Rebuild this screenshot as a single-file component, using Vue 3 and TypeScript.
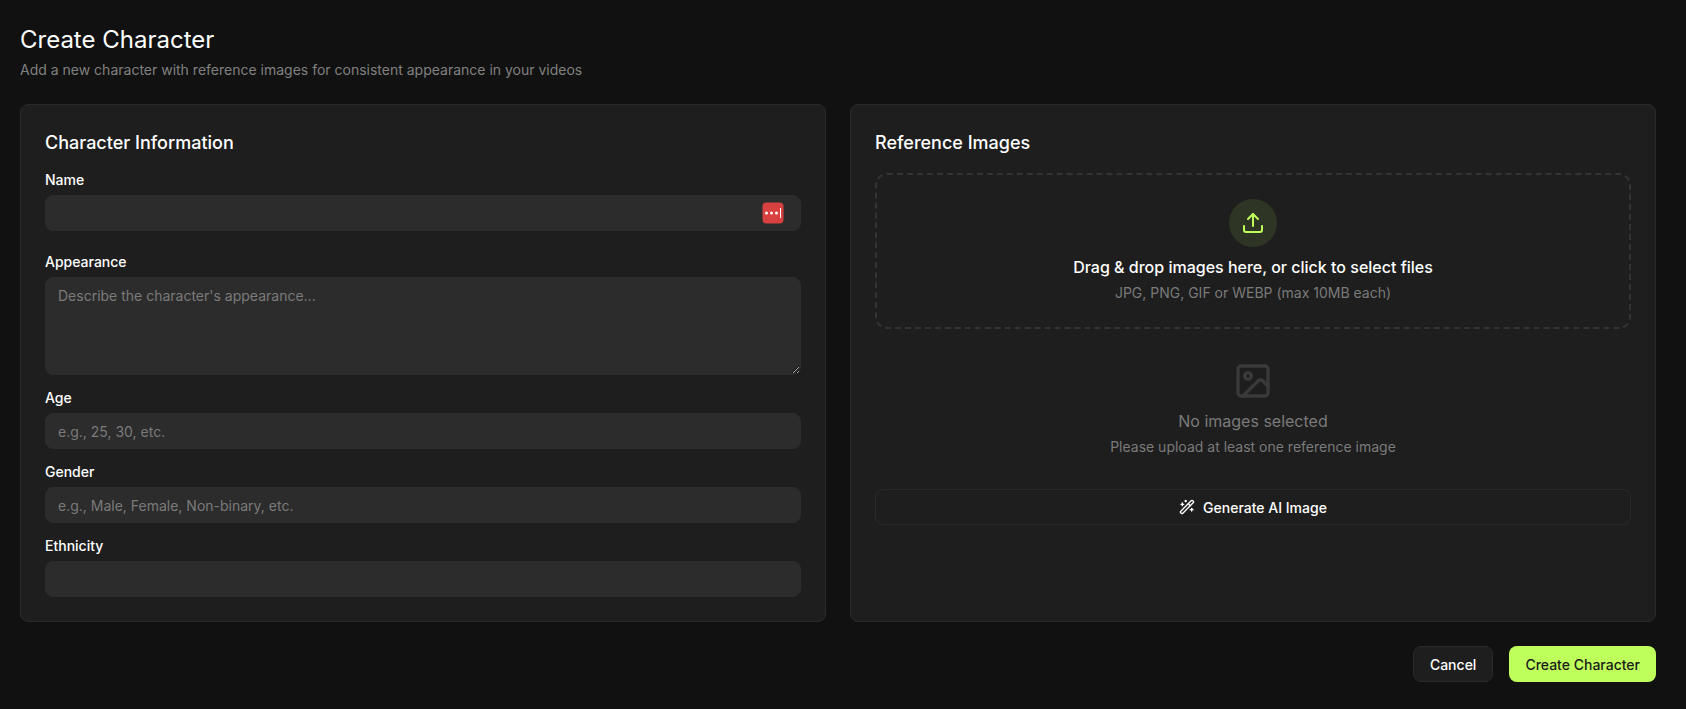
<script setup lang="ts">
interface Field { label: string; placeholder: string }
const lowerFields: Field[] = [
  { label: 'Age', placeholder: 'e.g., 25, 30, etc.' },
  { label: 'Gender', placeholder: 'e.g., Male, Female, Non-binary, etc.' },
  { label: 'Ethnicity', placeholder: '' },
]
</script>

<template>
  <main class="page">
    <header class="head">
      <h1>Create Character</h1>
      <p>Add a new character with reference images for consistent appearance in your videos</p>
    </header>

    <div class="columns">
      <section class="card">
        <h2 class="info-title">Character Information</h2>
        <div class="field name-field">
          <label>Name</label>
          <div class="input-wrap">
            <input type="text" />
            <svg class="pass-icon" width="22" height="22" viewBox="0 0 22 22" aria-hidden="true">
              <rect x="0.5" y="0.5" width="21" height="21" rx="4" fill="#d94141" />
              <circle cx="4.5" cy="11" r="1.5" fill="#fff" />
              <circle cx="9.5" cy="11" r="1.5" fill="#fff" />
              <circle cx="14.5" cy="11" r="1.5" fill="#fff" />
              <rect x="18" y="6" width="1" height="10" fill="#fff" />
            </svg>
          </div>
        </div>
        <div class="field">
          <label>Appearance</label>
          <textarea placeholder="Describe the character's appearance..."></textarea>
        </div>
        <div v-for="f in lowerFields" :key="f.label" class="field">
          <label>{{ f.label }}</label>
          <input type="text" :placeholder="f.placeholder" />
        </div>
      </section>

      <section class="card">
        <h2 class="images-title">Reference Images</h2>
        <div class="drop">
          <span class="drop-circle">
            <svg width="24" height="24" viewBox="0 0 24 24" fill="none" stroke="#bfff5c" stroke-width="2" stroke-linecap="round" stroke-linejoin="round" aria-hidden="true">
              <path d="M12 3v12" />
              <path d="m17 8-5-5-5 5" />
              <path d="M21 15v4a2 2 0 0 1-2 2H5a2 2 0 0 1-2-2v-4" />
            </svg>
          </span>
          <p class="drop-title">Drag &amp; drop images here, or click to select files</p>
          <p class="drop-sub">JPG, PNG, GIF or WEBP (max 10MB each)</p>
        </div>

        <div class="empty">
          <svg width="40" height="40" viewBox="0 0 24 24" fill="none" stroke="#3a3a3a" stroke-width="2" stroke-linecap="round" stroke-linejoin="round" aria-hidden="true">
            <rect x="3" y="3" width="18" height="18" rx="2" ry="2" />
            <circle cx="9" cy="9" r="2" />
            <path d="m21 15-3.086-3.086a2 2 0 0 0-2.828 0L6 21" />
          </svg>
          <p class="empty-title">No images selected</p>
          <p class="empty-sub">Please upload at least one reference image</p>
        </div>

        <button class="generate" type="button">
          <svg width="16" height="16" viewBox="0 0 24 24" fill="none" stroke="currentColor" stroke-width="2" stroke-linecap="round" stroke-linejoin="round" aria-hidden="true">
            <path d="m21.64 3.64-1.28-1.28a1.21 1.21 0 0 0-1.72 0L2.36 18.64a1.21 1.21 0 0 0 0 1.72l1.28 1.28a1.2 1.2 0 0 0 1.72 0L21.64 5.36a1.2 1.2 0 0 0 0-1.72" />
            <path d="m14 7 3 3" />
            <path d="M5 6v4" />
            <path d="M19 14v4" />
            <path d="M10 2v2" />
            <path d="M7 8H3" />
            <path d="M21 16h-4" />
            <path d="M11 3H9" />
          </svg>
          Generate AI Image
        </button>
      </section>
    </div>

    <footer class="actions">
      <button class="btn cancel" type="button">Cancel</button>
      <button class="btn primary" type="button">Create Character</button>
    </footer>
  </main>
</template>

<style>
html, body { background: #111111; }
</style>

<style scoped>
.page {
  box-sizing: border-box;
  height: 100vh;
  padding: 24px 30px 0 20px;
  background: #111111;
  color: #fff;
  font-family: Inter, "Liberation Sans", sans-serif;
}
.head h1 {
  margin: 0;
  font-size: 24px;
  line-height: 32px;
  font-weight: 400;
}
.head p {
  margin: 4px 0 0;
  font-size: 14px;
  line-height: 20px;
  color: #808080;
}
.columns {
  display: grid;
  grid-template-columns: 1fr 1fr;
  gap: 24px;
  margin-top: 24px;
}
.card {
  box-sizing: border-box;
  padding: 24px;
  background: #1e1e1e;
  border: 1px solid #2a2a2a;
  border-radius: 8px;
}
.card h2 {
  margin: 0;
  font-size: 18px;
  line-height: 28px;
  font-weight: 500;
}
.info-title { padding-bottom: 13px; }
.images-title { padding-bottom: 16px; }
.field {
  display: flex;
  flex-direction: column;
  margin-bottom: 13px;
}
.field:last-child { margin-bottom: 0; }
.name-field { margin-bottom: 21px; }
.field label {
  font-size: 14px;
  line-height: 20px;
  font-weight: 500;
  margin-bottom: 5px;
}
.input-wrap { position: relative; display: flex; }
input, textarea {
  box-sizing: border-box;
  width: 100%;
  border: 1px solid #2c2c2c;
  outline: 0;
  border-radius: 8px;
  padding: 7px 12px;
  background: #2c2c2c;
  color: #fff;
  font-family: inherit;
  font-size: 14px;
  line-height: 20px;
}
input { height: 36px; }
textarea { height: 98px; display: block; resize: vertical; padding-top: 8px; }
input::placeholder, textarea::placeholder { color: #7a7a7a; opacity: 1; }
.pass-icon { position: absolute; right: 17px; top: 7px; }
.drop {
  box-sizing: border-box;
  height: 156px;
  display: flex;
  flex-direction: column;
  align-items: center;
  padding-top: 24px;
  border: 2px dashed #333333;
  border-radius: 12px;
}
.drop-circle {
  width: 48px;
  height: 48px;
  border-radius: 50%;
  display: flex;
  align-items: center;
  justify-content: center;
  background: #2e3524;
}
.drop-title {
  margin: 8px 0 0;
  font-size: 16px;
  line-height: 24px;
  font-weight: 500;
}
.drop-sub {
  margin: 4px 0 0;
  font-size: 14px;
  line-height: 20px;
  color: #7a7a7a;
}
.empty {
  display: flex;
  flex-direction: column;
  align-items: center;
  padding-top: 32px;
}
.empty svg { display: block; }
.empty-title {
  margin: 8px 0 0;
  font-size: 16px;
  line-height: 24px;
  color: #7a7a7a;
}
.empty-sub {
  margin: 4px 0 0;
  font-size: 14px;
  line-height: 20px;
  color: #7a7a7a;
}
.generate {
  box-sizing: border-box;
  width: 100%;
  height: 36px;
  margin-top: 32px;
  display: flex;
  align-items: center;
  justify-content: center;
  gap: 8px;
  background: transparent;
  border: 1px solid #2a2a2a;
  border-radius: 8px;
  color: #fff;
  font-family: inherit;
  font-size: 14px;
  font-weight: 500;
}
.actions {
  display: flex;
  justify-content: flex-end;
  gap: 16px;
  margin-top: 24px;
}
.btn {
  box-sizing: border-box;
  height: 36px;
  padding: 0 16px;
  border-radius: 8px;
  font-family: inherit;
  font-size: 14px;
  font-weight: 500;
}
.cancel {
  background: #1e1e1e;
  border: 1px solid #2a2a2a;
  color: #fff;
}
.primary {
  background: #bfff5c;
  border: 0;
  color: #1a1a1a;
}
</style>
